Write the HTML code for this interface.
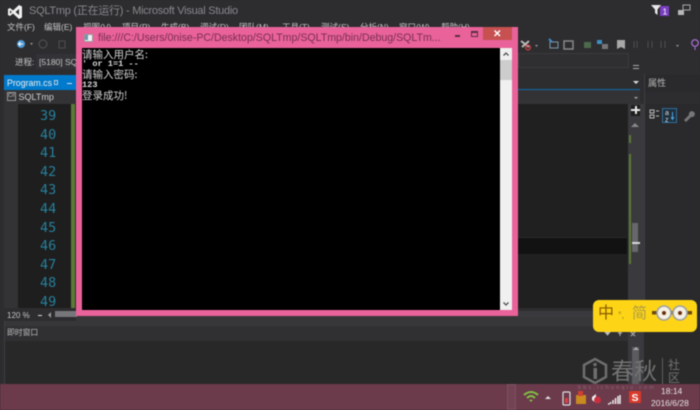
<!DOCTYPE html>
<html><head><meta charset="utf-8">
<style>
html,body{margin:0;padding:0;background:#2a2a2c;}
#r{position:relative;width:700px;height:410px;overflow:hidden;background:#2d2d30;font-family:"Liberation Sans","Noto Sans CJK SC",sans-serif;color:#c8c8c8;filter:blur(.5px);}
.a{position:absolute;white-space:nowrap;}
.n{position:absolute;left:40px;width:15px;text-align:right;font:13.5px "DejaVu Sans Mono","Liberation Mono",monospace;color:#277f9c;line-height:16px;}
.m{position:absolute;top:22px;font-size:8.5px;line-height:11px;color:#c4c4c4;}
.c{position:absolute;left:82px;font-size:10.5px;line-height:11px;color:#d0d0d0;font-family:"Noto Sans CJK SC",sans-serif;white-space:nowrap;}
.b{position:absolute;left:82px;font:bold 8.6px/9px "Liberation Mono",monospace;color:#d8d8d8;white-space:pre;}
</style></head><body><div id="r">

<!-- title -->
<svg class="a" style="left:8px;top:4px" width="14" height="16" viewBox="0 0 14 16"><path d="M0 5 L2 4 L5 6.500 L11 1 L14 2.500 V13.500 L11 15 L5 9.500 L2 12 L0 11 Z M2 6.300 V9.700 L3.800 8 Z M11 5 L7.500 8 L11 11 Z" fill="#f0f0f0" fill-rule="evenodd"/></svg>
<div class="a" style="left:29px;top:4px;font-size:11px;letter-spacing:-.26px;line-height:15px;color:#88888c;">SQLTmp (正在运行) - Microsoft Visual Studio</div>

<svg class="a" style="left:650px;top:4px" width="28" height="12"><path d="M1 1 H11 L7.500 5.500 V11 L5 9 V5.500 Z" fill="#e8e8e8"/><rect x="10" y="2" width="9" height="10" fill="#7a3fc0"/><text x="12.500" y="10.500" font-size="8.500" fill="#fff" font-family="Liberation Sans">1</text></svg>
<svg class="a" style="left:677px;top:4px" width="22" height="12"><rect x="1" y="6" width="6" height="5" fill="#b8b8b8"/><rect x="6" y="1" width="7" height="5" fill="none" stroke="#a8a8a8"/></svg>

<!-- menu -->
<div class="m" style="left:7px;">文件(F)</div>
<div class="m" style="left:44px;">编辑(E)</div>
<div class="m" style="left:83px;">视图(V)</div>
<div class="m" style="left:122px;">项目(P)</div>
<div class="m" style="left:161px;">生成(B)</div>
<div class="m" style="left:200px;">调试(D)</div>
<div class="m" style="left:239px;">团队(M)</div>
<div class="m" style="left:282px;">工具(T)</div>
<div class="m" style="left:321px;">测试(S)</div>
<div class="m" style="left:360px;">分析(N)</div>
<div class="m" style="left:399px;">窗口(W)</div>
<div class="m" style="left:441px;">帮助(H)</div>

<!-- toolbar -->
<svg class="a" style="left:14px;top:37px" width="70" height="14"><circle cx="7" cy="7" r="4" fill="#4b9ad8"/><path d="M4.500 7 H9 M6.500 5 L4.500 7 L6.500 9" stroke="#fff" fill="none"/><path d="M16 6 h3 l-1.500 2z" fill="#999"/><circle cx="29" cy="7" r="4" fill="none" stroke="#555"/><path d="M45 4 v7 h6 v-7z" fill="none" stroke="#4e4e4e"/></svg>
<div class="a" style="left:15px;top:57px;font-size:8.500px;line-height:11px;color:#c4c4c4;">进程:</div>
<div class="a" style="left:36px;top:54px;width:40px;height:15px;background:#333337;"></div>
<div class="a" style="left:39px;top:57px;font-size:8.500px;line-height:11px;color:#c4c4c4;">[5180] SQ</div>
<div class="a" style="left:518px;top:53px;width:111px;height:15px;background:#2f2f32;border:1px solid #3a3a3d;box-sizing:border-box;"></div>

<svg class="a" style="left:518px;top:38px;" width="182" height="14">
<path d="M3 3 L11 9 M11 3 L4 9" stroke="#b8b8b8" stroke-width="2"/><circle cx="10" cy="9.500" r="2.400" fill="none" stroke="#d84040" stroke-width="1.200"/>
<path d="M17 7 h3 l-1.500 2z" fill="#999"/>
<rect x="32" y="4" width="8" height="6" fill="none" stroke="#7f98a8"/><path d="M31 1 l3 3" stroke="#3f8ac8" stroke-width="2"/>
<rect x="46" y="3" width="9" height="8" fill="none" stroke="#888" stroke-width="1.500"/>
<rect x="66" y="4" width="7" height="6" fill="#4c6a4c"/>
<rect x="79" y="2" width="5" height="4" fill="#3f8fc0"/><rect x="84" y="6" width="6" height="5" fill="#777"/>
<path d="M99 2 h8 v9 l-4 -2 l-4 2z" fill="#a8a8a8"/>
<path d="M116 3 v7 M119 3 v7 M130 3 v7 M134 3 v7 M143 3 v7 M147 3 v7" stroke="#4e4e4e"/>
<path d="M158 7 h3 l-1.500 2z" fill="#999"/>
<circle cx="177" cy="5" r="3.300" fill="none" stroke="#b070e0" stroke-width="1.200"/><path d="M177 9 v3" stroke="#b070e0"/>
</svg>
<div class="a" style="left:633px;top:65px;width:6px;height:2px;border-top:1px solid #aaa;border-bottom:1px solid #aaa;"></div>

<!-- tab row -->
<div class="a" style="left:4px;top:75px;width:72px;height:15px;background:#007acc;"></div>
<div class="a" style="left:7px;top:77px;font-size:8.800px;line-height:12px;color:#f0f0f0;">Program.cs</div>
<div class="a" style="left:54px;top:80px;width:4px;height:5px;border:1px solid #bcd;box-sizing:border-box;"></div>
<div class="a" style="left:67px;top:83px;width:5px;height:1px;background:#dde;"></div>
<div class="a" style="left:76px;top:88.500px;width:564px;height:1.500px;background:#0f6aa8;"></div>
<div class="a" style="left:633px;top:81px;width:0;height:0;border:3px solid transparent;border-top:3px solid #ddd;"></div>

<!-- nav row -->
<div class="a" style="left:4px;top:90px;width:636px;height:14px;background:#333336;"></div>
<div class="a" style="left:7px;top:92px;width:9px;height:9px;border:1px solid #999;box-sizing:border-box;font-size:5px;line-height:7px;text-align:center;color:#ccc;">C#</div>
<div class="a" style="left:18.500px;top:91px;font-size:9px;line-height:12px;color:#cfcfcf;">SQLTmp</div>
<div class="a" style="left:634px;top:97px;width:0;height:0;border:2px solid transparent;border-top:2px solid #aaa;"></div>

<!-- editor -->
<div class="a" style="left:4px;top:104px;width:14px;height:204px;background:#333336;"></div>
<div class="a" style="left:18px;top:104px;width:53px;height:204px;background:#1e1e1e;"></div>
<div class="a" style="left:71px;top:104px;width:4px;height:204px;background:#5b7a37;"></div>
<div class="a" style="left:518px;top:104px;width:110px;height:204px;background:#202020;"></div>
<div class="a" style="left:518px;top:238px;width:109px;height:16px;background:#121212;"></div>
<div class="a" style="left:518px;top:237px;width:109px;height:1px;background:#2a2a2a;"></div>
<div class="a" style="left:628px;top:104px;width:16px;height:212px;background:#3a3a3e;"></div>
<div class="a" style="left:629px;top:135px;width:2px;height:8px;background:#5b7a37;"></div>
<div class="a" style="left:629px;top:154px;width:2px;height:110px;background:#5b7a37;"></div>
<div class="a" style="left:632px;top:223px;width:6px;height:29px;background:#68686c;"></div>
<div class="a" style="left:632px;top:242px;width:8px;height:2px;background:#d8d8d8;"></div>
<div class="a" style="left:631px;top:105px;width:9px;height:11px;background:#1e1e1e;"></div>
<div class="a" style="left:631px;top:109px;width:9px;height:2px;background:#e8e8e8;"></div>
<div class="a" style="left:634.500px;top:106px;width:2px;height:8px;background:#e8e8e8;"></div>
<div class="a" style="left:631px;top:119px;width:0;height:0;border:4px solid transparent;border-bottom:4px solid #888;"></div>

<div class="n" style="top:108px">39</div>
<div class="n" style="top:126.600px">40</div>
<div class="n" style="top:145.200px">41</div>
<div class="n" style="top:163.800px">42</div>
<div class="n" style="top:182.400px">43</div>
<div class="n" style="top:201px">44</div>
<div class="n" style="top:219.600px">45</div>
<div class="n" style="top:238.200px">46</div>
<div class="n" style="top:256.800px">47</div>
<div class="n" style="top:275.400px">48</div>
<div class="n" style="top:294px">49</div>

<!-- properties panel -->
<div class="a" style="left:644px;top:75px;width:56px;height:241px;background:#2a2a2c;"></div>
<div class="a" style="left:644px;top:74px;width:1px;height:310px;background:#3e3e42;"></div>
<div class="a" style="left:648px;top:77px;font-size:9px;line-height:12px;color:#b8b8b8;">属性</div>
<div class="a" style="left:645px;top:92px;width:55px;height:12px;background:#2d2d30;"></div>
<svg class="a" style="left:646px;top:107px" width="54" height="18"><path d="M4 3h4v3h-4zM4 8h4v3h-4zM10 4h3M10 9h3" stroke="#bbb" fill="none"/><rect x="16.500" y="1.500" width="14" height="14" fill="#20303c" stroke="#2f6f9e"/><text x="19" y="8" font-size="7" fill="#ddd" font-family="Liberation Sans">a</text><text x="19" y="15" font-size="7" fill="#ddd" font-family="Liberation Sans">z</text><path d="M26.500 5v7M25 10l1.500 2.500L28 10" stroke="#4ba3e0" fill="none"/><path d="M38 13l5-5a3 3 0 1 1 2 2l-5 5z" fill="#777"/></svg>

<!-- bottom panel -->
<div class="a" style="left:4px;top:316px;width:624px;height:10px;background:#37373a;"></div>
<div class="a" style="left:4px;top:326px;width:624px;height:15px;background:#303033;"></div>
<div class="a" style="left:4px;top:341px;width:696px;height:43px;background:#282828;"></div>
<div class="a" style="left:628px;top:317px;width:16px;height:67px;background:#3a3a3e;"></div>
<div class="a" style="left:644px;top:325px;width:56px;height:59px;background:#292929;"></div>
<div class="a" style="left:7px;top:327px;font-size:7.800px;line-height:12px;color:#bdbdbd;">即时窗口</div>
<div class="a" style="left:0;top:0;width:4px;height:384px;background:#2d2d30;"></div>
<div class="a" style="left:4px;top:316px;width:1px;height:68px;background:#3e3e42;"></div>
<div class="a" style="left:632px;top:347px;width:7px;height:37px;background:#5c5c60;"></div>
<div class="a" style="left:632.500px;top:344px;width:0;height:0;border:3px solid transparent;border-bottom:3px solid #aaa;"></div>

<!-- zoom row -->
<div class="a" style="left:4px;top:308px;width:72px;height:13px;background:#2d2d30;"></div>
<div class="a" style="left:7px;top:310px;font-size:8px;line-height:11px;color:#c4c4c4;">120 %</div>
<div class="a" style="left:38px;top:315px;width:4px;height:1px;background:#ddd;"></div>
<div class="a" style="left:48px;top:312px;width:0;height:0;border:3px solid transparent;border-right:3px solid #999;border-left:0;"></div>
<div class="a" style="left:55px;top:311px;width:22px;height:6px;background:#77777b;"></div>
<div class="a" style="left:518px;top:311px;width:110px;height:6px;background:#3a3a3e;"></div>

<!-- watermark -->
<svg class="a" style="left:582px;top:357px" width="26" height="28"><path d="M13 2 L24 8 V20 L13 26 L2 20 V8 Z" fill="none" stroke="#6e6e6e" stroke-width="2.500"/><rect x="11.500" y="11" width="3.500" height="11" fill="#6e6e6e"/><circle cx="13" cy="7.500" r="1.800" fill="#6e6e6e"/></svg>
<div class="a" style="left:611px;top:358px;font-size:23px;line-height:27px;color:#737373;">春秋</div>
<div class="a" style="left:662px;top:358px;width:1px;height:28px;background:#5e5e5e;"></div>
<div class="a" style="left:668px;top:359px;font-size:12px;line-height:13px;color:#737373;white-space:normal;width:14px;">社区</div>

<!-- taskbar -->
<div class="a" style="left:0;top:384px;width:700px;height:26px;background:#6b3a4b;"></div>
<div class="a" style="left:507px;top:384px;width:9px;height:26px;background:#734353;border:1px solid #7c5262;box-sizing:border-box;"></div>
<div class="a" style="left:578px;top:385px;font-size:5.500px;line-height:7px;letter-spacing:2.200px;color:#8a6a76;">bbs.ichunqiu.com</div>
<svg class="a" style="left:522px;top:388px" width="100" height="20"><path d="M2 7 Q9 1 16 7 M5 10 Q9 6 13 10 M8 13 Q9 12 10 13" stroke="#7fc242" stroke-width="2" fill="none"/><path d="M23 11l3-3 3 3z" fill="#ddd"/>
<rect x="41" y="4" width="7" height="13" rx="1" fill="none" stroke="#ddd" stroke-width="1.200"/><rect x="43" y="10" width="3" height="5" fill="#e04040"/>
<rect x="54" y="7" width="10" height="9" fill="#c98a20"/><rect x="56" y="3" width="5" height="5" fill="#d04030"/>
<path d="M74 6v9l-4-3v-3z" fill="#eee"/><circle cx="75.500" cy="12" r="3.500" fill="#c83040"/>
<path d="M86 16h1.500M88.500 16v-2M91 16v-4M93.500 16v-6M96 16v-8M98 16v-9" stroke="#eee" stroke-width="1.500"/></svg>
<svg class="a" style="left:629px;top:391px" width="12" height="12"><rect width="12" height="12" rx="1" fill="#d83a2a"/><text x="2.500" y="10" font-size="10.500" font-weight="bold" fill="#fff" font-family="Liberation Sans">S</text></svg>
<div class="a" style="left:661px;top:386px;font-size:8.500px;line-height:11px;color:#e4e4e4;">18:14</div>
<div class="a" style="left:651px;top:398px;font-size:8.500px;line-height:11px;color:#e4e4e4;">2016/6/28</div>

<!-- ime -->
<div class="a" style="left:593px;top:300px;width:104px;height:32px;background:#fdd516;border-radius:6px;"></div>
<div class="a" style="left:598px;top:304px;font-size:16px;line-height:20px;color:#8a5a00;">中</div>
<div class="a" style="left:618px;top:310px;font-size:9px;line-height:10px;color:#a08020;">°,</div>
<div class="a" style="left:632px;top:304px;font-size:15px;line-height:20px;color:#ad9a45;">简</div>
<svg class="a" style="left:650px;top:305px" width="45" height="16"><rect x="2" y="6" width="40" height="3.500" fill="#6a4a10"/><circle cx="14" cy="8" r="7" fill="#f4f0e4" stroke="#a0a0a0" stroke-width="1.600"/><circle cx="30" cy="8" r="7" fill="#f4f0e4" stroke="#a0a0a0" stroke-width="1.600"/><circle cx="14" cy="8" r="2" fill="#6a3010"/><circle cx="30" cy="8" r="2" fill="#6a3010"/></svg>
<svg class="a" style="left:604px;top:332px" width="32" height="5"><path d="M1 0h5l-2.500 3zM16 0v4M14 1h4M27 0l4 4M31 0l-4 4" stroke="#bbb" fill="#bbb"/></svg>

<!-- console window -->
<div class="a" style="left:76px;top:27px;width:442px;height:289px;background:#e9629a;"></div>
<div class="a" style="left:82px;top:48px;width:418px;height:262px;background:#000;"></div>
<div class="a" style="left:500px;top:48px;width:12px;height:262px;background:#f0f0f0;"></div>
<div class="a" style="left:500px;top:60px;width:12px;height:20px;background:#cdcdcd;"></div>
<svg class="a" style="left:500px;top:48px" width="12" height="262"><path d="M3.500 7.500L6 5l2.500 2.500M3.500 254.500L6 257l2.500-2.500" stroke="#505050" stroke-width="1.300" fill="none"/></svg>
<div class="a" style="left:483px;top:27px;width:29px;height:13px;background:#c75050;"></div>
<svg class="a" style="left:483px;top:27px" width="29" height="13"><path d="M11.500 3.500L17 9M17 3.500L11.500 9" stroke="#fff" stroke-width="1.500"/></svg>
<div class="a" style="left:455px;top:35px;width:5px;height:2px;background:#5a3040;"></div>
<div class="a" style="left:471px;top:31px;width:7px;height:6px;border:1px solid #5a3040;border-top-width:2px;box-sizing:border-box;"></div>
<div class="a" style="left:84px;top:34px;width:9px;height:8px;background:#f2f2f2;border:1px solid #999;box-sizing:border-box;"></div>
<div class="a" style="left:85px;top:35px;width:3px;height:5px;background:#6a97b0;"></div>
<div class="a" style="left:98px;top:31px;font-size:10.600px;line-height:14px;color:#7a2f50;">file:///C:/Users/0nise-PC/Desktop/SQLTmp/SQLTmp/bin/Debug/SQLTm...</div>

<div class="c" style="top:49px">请输入用户名:</div>
<div class="b" style="top:60px">' or 1=1 --</div>
<div class="c" style="top:69px">请输入密码:</div>
<div class="b" style="top:81px">123</div>
<div class="c" style="top:90px">登录成功!</div>

</div></body></html>
